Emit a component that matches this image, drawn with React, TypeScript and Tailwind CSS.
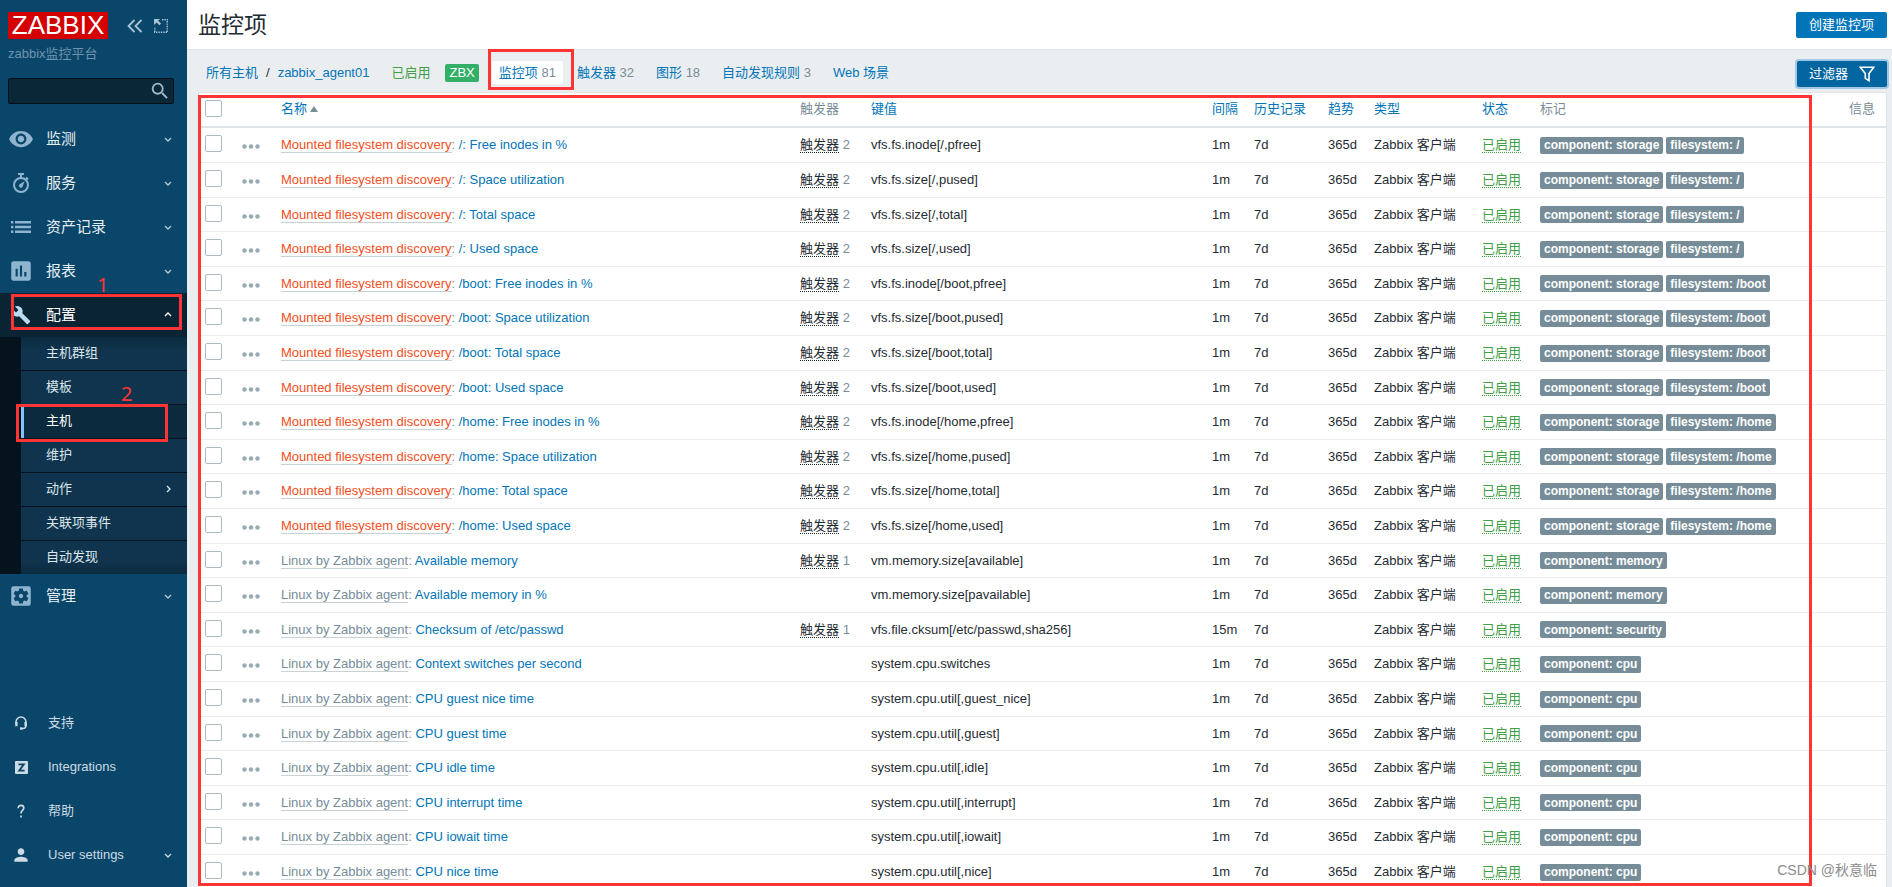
import React from "react";
import { MdBuild, MdInsertChart, MdPerson, MdRemoveRedEye, MdSearch, MdSettingsApplications } from "react-icons/md";

type Item = {
  template: string;
  discovered?: boolean;
  name: string;
  triggers?: number;
  itemKey: string;
  interval?: string;
  trends?: string;
  tags: string[];
};

const mounted = (path: string): Item[] =>
  [
    ["Free inodes in %", `vfs.fs.inode[${path},pfree]`],
    ["Space utilization", `vfs.fs.size[${path},pused]`],
    ["Total space", `vfs.fs.size[${path},total]`],
    ["Used space", `vfs.fs.size[${path},used]`],
  ].map(([name, itemKey]) => ({
    template: "Mounted filesystem discovery",
    discovered: true,
    name: `${path}: ${name}`,
    triggers: 2,
    itemKey,
    tags: ["component: storage", `filesystem: ${path}`],
  }));

const linux = (name: string, itemKey: string, tag: string, extra: Partial<Item> = {}): Item => ({
  template: "Linux by Zabbix agent",
  name,
  itemKey,
  tags: [`component: ${tag}`],
  ...extra,
});

const items: Item[] = [
  ...mounted("/"),
  ...mounted("/boot"),
  ...mounted("/home"),
  linux("Available memory", "vm.memory.size[available]", "memory", { triggers: 1 }),
  linux("Available memory in %", "vm.memory.size[pavailable]", "memory"),
  linux("Checksum of /etc/passwd", "vfs.file.cksum[/etc/passwd,sha256]", "security", {
    triggers: 1,
    interval: "15m",
    trends: "",
  }),
  linux("Context switches per second", "system.cpu.switches", "cpu"),
  linux("CPU guest nice time", "system.cpu.util[,guest_nice]", "cpu"),
  linux("CPU guest time", "system.cpu.util[,guest]", "cpu"),
  linux("CPU idle time", "system.cpu.util[,idle]", "cpu"),
  linux("CPU interrupt time", "system.cpu.util[,interrupt]", "cpu"),
  linux("CPU iowait time", "system.cpu.util[,iowait]", "cpu"),
  linux("CPU nice time", "system.cpu.util[,nice]", "cpu"),
];

function Chevron({ className = "" }: { className?: string }) {
  return (
    <svg className={`h-2 w-2 shrink-0 ${className}`} viewBox="0 0 8 8" fill="none" stroke="currentColor" strokeWidth="1.3" aria-hidden="true">
      <path d="M1 3 4 6 7 3" />
    </svg>
  );
}

function StopwatchIcon() {
  return (
    <svg className="h-5 w-5" viewBox="0 0 20 20" fill="none" stroke="currentColor" aria-hidden="true">
      <circle cx="10" cy="12" r="7" strokeWidth="2" />
      <path d="M7 1h6M10 1v4M15 4.5l2 2" strokeWidth="2" />
      <path d="M13.6 8.2 11.6 13.4A1.9 1.9 0 1 1 8.6 11.2Z" fill="currentColor" stroke="none" />
    </svg>
  );
}

function ListIcon() {
  return (
    <svg className="h-3 w-5" viewBox="0 0 20 12" fill="currentColor" aria-hidden="true">
      <path d="M0 0h2.4v2.4H0zM0 4.8h2.4v2.4H0zM0 9.6h2.4V12H0zM4 0h16v2.4H4zM4 4.8h16v2.4H4zM4 9.6h16V12H4z" />
    </svg>
  );
}

function HeadsetIcon() {
  return (
    <svg className="h-[14px] w-[14px]" viewBox="0 0 14 14" fill="none" stroke="currentColor" aria-hidden="true">
      <path d="M2 8V6a5 5 0 0 1 10 0v3.5A3 3 0 0 1 9 12.4H7" strokeWidth="1.5" />
      <path d="M2.4 6v4.2M11.6 6v4.2" strokeWidth="2.4" />
      <path d="M6 12.5h2.4" strokeWidth="2.4" />
    </svg>
  );
}

function IntegrationsIcon() {
  return (
    <svg className="h-[13px] w-[13px]" viewBox="0 0 13 13" aria-hidden="true">
      <rect width="13" height="13" rx="1" fill="currentColor" />
      <path d="M3.4 3.3h5.4L4.2 9.7h5.4" fill="none" stroke="#0a466a" strokeWidth="1.8" />
    </svg>
  );
}

function HelpIcon() {
  return (
    <svg className="h-[14px] w-[14px]" viewBox="0 0 14 14" fill="none" stroke="currentColor" strokeWidth="1.7" aria-hidden="true">
      <path d="M4.2 4.2C4.2 2.4 5.3 1.4 7 1.4s2.8 1 2.8 2.6C9.8 6 7 6.4 7 9.4" />
      <path d="M7 11.4v2" />
    </svg>
  );
}

function MenuLink({ icon, label, open = false }: { icon: React.ReactNode; label: string; open?: boolean }) {
  return (
    <a
      href="#"
      aria-expanded={open}
      className={`flex h-11 items-center pr-[15px] text-[15px] leading-5 ${open ? "bg-[#0b2433] text-white" : "text-[#e6eef3]"}`}
    >
      <span className={`flex w-[42px] shrink-0 justify-center ${open ? "text-[#b9dcf5]" : "text-[#8fb4cf]"}`}>{icon}</span>
      <span className="ml-1 grow">{label}</span>
      <Chevron className={open ? "rotate-180" : "text-[#b5cbd9]"} />
    </a>
  );
}

function FooterLink({ icon, label, more = false }: { icon: React.ReactNode; label: string; more?: boolean }) {
  return (
    <a href="#" className="flex h-11 items-center pr-[15px] text-[#ccdae3]">
      <span className="flex w-[42px] shrink-0 justify-center">{icon}</span>
      <span className="ml-[6px] grow">{label}</span>
      {more && <Chevron />}
    </a>
  );
}

const submenu = ["主机群组", "模板", "主机", "维护", "动作", "关联项事件", "自动发现"];

function Sidebar() {
  return (
    <aside className="flex w-[187px] shrink-0 flex-col bg-[#0a466a]">
      <div className="px-2 pt-3">
        <div className="flex items-center">
          <a href="#" className="flex h-[27px] w-[100px] items-center justify-center bg-[#d40000] text-[26px] leading-[27px] text-white">
            ZABBIX
          </a>
          <button type="button" aria-label="收起侧边栏" className="ml-[18px] text-[#a9c3d4]">
            <svg className="h-4 w-[18px]" viewBox="0 0 18 16" fill="none" stroke="currentColor" strokeWidth="1.8">
              <path d="M8.5 2 2.5 8l6 6M15.5 2l-6 6 6 6" />
            </svg>
          </button>
          <button type="button" aria-label="隐藏侧边栏" className="ml-[10px] text-[#a9c3d4]">
            <svg className="h-[14px] w-[14px]" viewBox="0 0 14 14" fill="none" stroke="currentColor">
              <path d="M8 .8h6M13.2 2v12M13 13.2H0M.8 13V8" strokeWidth="1.4" strokeDasharray="1.4 1" />
              <path d="M0 0h6L4.2 1.8 7 4.6 5.4 6.2 2.6 3.4 0 6Z" fill="currentColor" stroke="none" />
            </svg>
          </button>
        </div>
        <div className="mt-[7px] leading-4 text-[#6f94ad]">zabbix监控平台</div>
        <form className="mt-4 mr-[5px] flex h-[26px] items-center rounded-xs border border-[#03101a] bg-[#0a2738]" onSubmit={(e) => e.preventDefault()}>
          <input type="text" aria-label="搜索" className="h-full min-w-0 grow bg-transparent px-2 text-white outline-none" />
          <button type="submit" aria-label="搜索" className="mr-[2px] text-[#9db8c9]">
            <MdSearch size={22} />
          </button>
        </form>
      </div>
      <nav className="mt-[13px]" aria-label="主菜单">
        <MenuLink icon={<MdRemoveRedEye size={26} />} label="监测" />
        <MenuLink icon={<StopwatchIcon />} label="服务" />
        <MenuLink icon={<ListIcon />} label="资产记录" />
        <MenuLink icon={<MdInsertChart size={26} />} label="报表" />
        <div className="relative">
          <MenuLink icon={<MdBuild size={20} />} label="配置" open />
          <div className="pointer-events-none absolute top-px right-[5px] bottom-[7px] left-[11px] border-3 border-[#ff3535]" />
          <span className="absolute -top-[20px] left-[97px] font-['Noto_Sans'] text-[20px] leading-6 text-[#ff3535]">1</span>
        </div>
        <ul className="bg-[#04131c] pl-[21px]">
          {submenu.map((label) => (
            <li
              key={label}
              className={`relative border-b border-[#04131c] bg-[#10344d] first:bg-linear-to-b first:from-[#0b2b40] first:to-[#10344d] first:to-40% last:border-b-0 last:bg-linear-to-t last:from-[#0b2b40] last:to-[#10344d] last:to-40% ${
                label === "主机" ? "z-10" : ""
              }`}
            >
              <a
                href="#"
                className={`flex h-[33px] items-center pr-[15px] pb-px leading-4 ${
                  label === "主机" ? "border-l-3 border-[#7cc4fa] bg-[#0b2a3d] pl-[22px] text-white" : "pl-[25px] text-[#dbe6ed]"
                }`}
              >
                <span className="grow">{label}</span>
                {label === "动作" && <Chevron className="-rotate-90" />}
              </a>
              {label === "主机" && (
                <>
                  <div className="pointer-events-none absolute -top-px right-[19px] -bottom-[4px] -left-[5px] border-3 border-[#ff3535]" />
                  <span className="absolute -top-[23px] left-[100px] font-['Noto_Sans'] text-[20px] leading-6 text-[#ff3535]">2</span>
                </>
              )}
            </li>
          ))}
        </ul>
        <MenuLink icon={<MdSettingsApplications size={26} />} label="管理" />
      </nav>
      <nav className="mt-auto pb-[10px]" aria-label="用户菜单">
        <FooterLink icon={<HeadsetIcon />} label="支持" />
        <FooterLink icon={<IntegrationsIcon />} label="Integrations" />
        <FooterLink icon={<HelpIcon />} label="帮助" />
        <FooterLink icon={<MdPerson size={20} />} label="User settings" more />
      </nav>
    </aside>
  );
}

function Tab({ label, count }: { label: string; count?: number }) {
  return (
    <span>
      <a href="#" className="text-[#0275b8]">
        {label}
      </a>
      {count !== undefined && <span className="text-[#768d99]"> {count}</span>}
    </span>
  );
}

function HostNav() {
  return (
    <div className="flex h-[42px] items-center pr-[5px] pl-[19px] leading-4 whitespace-nowrap">
      <nav className="flex grow items-center pt-[3px]" aria-label="主机导航">
        <a href="#" className="text-[#0275b8]">
          所有主机
        </a>
        <span className="mx-2">/</span>
        <a href="#" className="text-[#0275b8]">
          zabbix_agent01
        </a>
        <span className="ml-[22px] text-[#429e47]">已启用</span>
        <span className="ml-[15px] flex h-[18px] items-center rounded-xs bg-[#34af67] px-1 text-white">ZBX</span>
        <span className="relative ml-[13px] flex h-[23px] items-center rounded-xs bg-white px-[7px]">
          <Tab label="监控项" count={81} />
          <span className="pointer-events-none absolute -top-[12px] -right-[11px] -bottom-[6px] -left-[4px] border-3 border-[#ff3535]" />
        </span>
        <span className="ml-[14px] flex gap-[22px]">
          <Tab label="触发器" count={32} />
          <Tab label="图形" count={18} />
          <Tab label="自动发现规则" count={3} />
          <Tab label="Web 场景" />
        </span>
      </nav>
      <button type="button" className="mt-[6px] flex h-[26px] items-center gap-[11px] rounded-xs bg-[#02659f] px-3 text-white ring-2 ring-[#9fc8e6]">
        过滤器
        <svg className="h-4 w-4" viewBox="0 0 16 16" fill="none" stroke="currentColor" strokeWidth="1.6" aria-hidden="true">
          <path d="M1.3 1.3h13.4L10 7.6v7.1L6.3 12.4V7.6Z" />
        </svg>
      </button>
    </div>
  );
}

function Check({ label }: { label: string }) {
  return (
    <input
      type="checkbox"
      aria-label={label}
      className="block h-[17px] w-[17px] appearance-none rounded-xs border border-[#acbbc2] bg-white checked:bg-[#0275b8]"
    />
  );
}

const columns: { label: string; sortable: boolean }[] = [
  { label: "触发器", sortable: false },
  { label: "键值", sortable: true },
  { label: "间隔", sortable: true },
  { label: "历史记录", sortable: true },
  { label: "趋势", sortable: true },
  { label: "类型", sortable: true },
  { label: "状态", sortable: true },
  { label: "标记", sortable: false },
  { label: "信息", sortable: false },
];

function ItemTable() {
  return (
    <div className="relative mr-[5px] ml-[11px] border border-[#dfe4e7] bg-white">
      <table className="w-full table-fixed border-separate border-spacing-0 text-left leading-4 whitespace-nowrap [&_td]:border-b [&_td]:border-[#ebeef0] [&_td]:px-[6px] [&_th]:border-b-2 [&_th]:border-[#dfe4e7] [&_th]:px-[6px] [&_th]:font-normal">
        <colgroup>
          <col className="w-[37px]" />
          <col className="w-[39px]" />
          <col />
          <col className="w-[71px]" />
          <col className="w-[341px]" />
          <col className="w-[42px]" />
          <col className="w-[74px]" />
          <col className="w-[46px]" />
          <col className="w-[108px]" />
          <col className="w-[58px]" />
          <col className="w-[309px]" />
          <col className="w-[43px]" />
        </colgroup>
        <thead>
          <tr className="h-[35px]">
            <th className="pb-[2px]">
              <Check label="全选" />
            </th>
            <th />
            <th className="pb-[2px]">
              <a href="#" className="text-[#0275b8]">
                名称
                <svg className="ml-[3px] inline h-[6px] w-2" viewBox="0 0 8 6" fill="#768d99" aria-hidden="true">
                  <path d="M4 0 8 6H0Z" />
                </svg>
              </a>
            </th>
            {columns.map(({ label, sortable }) => (
              <th key={label} className="pb-[2px] text-[#768d99]">
                {sortable ? (
                  <a href="#" className="text-[#0275b8]">
                    {label}
                  </a>
                ) : (
                  label
                )}
              </th>
            ))}
          </tr>
        </thead>
        <tbody>
          {items.map((item) => (
            <tr key={item.itemKey} className="h-[35px] nth-[5n+3]:h-[34px] nth-[5n+5]:h-[34px]">
              <td className="pb-[3px]">
                <Check label={item.name} />
              </td>
              <td>
                <button type="button" aria-label="更多操作" className="mt-[3px] block text-[#97aab3]">
                  <svg className="h-[5px] w-[18px]" viewBox="0 0 18 5" fill="currentColor">
                    <circle cx="2.5" cy="2.5" r="2.2" />
                    <circle cx="9" cy="2.5" r="2.2" />
                    <circle cx="15.5" cy="2.5" r="2.2" />
                  </svg>
                </button>
              </td>
              <td className="text-[#768d99]">
                <a href="#" className={`border-b border-[#c8d1d6] ${item.discovered ? "text-[#f24f1d]" : ""}`}>
                  {item.template}
                </a>
                {": "}
                <a href="#" className="text-[#0275b8]">
                  {item.name}
                </a>
              </td>
              <td className="text-[#768d99]">
                {item.triggers !== undefined && (
                  <>
                    <a href="#" className="border-b border-dotted border-[#1f2c33] text-[#1f2c33]">
                      触发器
                    </a>{" "}
                    {item.triggers}
                  </>
                )}
              </td>
              <td>{item.itemKey}</td>
              <td>{item.interval ?? "1m"}</td>
              <td>7d</td>
              <td>{item.trends ?? "365d"}</td>
              <td>Zabbix 客户端</td>
              <td>
                <a href="#" className="border-b border-dotted border-[#429e47] text-[#429e47]">
                  已启用
                </a>
              </td>
              <td>
                <div className="flex gap-[3px]">
                  {item.tags.map((tag) => (
                    <span key={tag} className="flex h-[17px] items-center rounded-xs bg-[#768d99] px-1 text-xs font-bold text-white">
                      {tag}
                    </span>
                  ))}
                </div>
              </td>
              <td />
            </tr>
          ))}
        </tbody>
      </table>
      <div className="pointer-events-none absolute top-[2px] right-[74px] bottom-1 -left-px border-3 border-[#ff3535]" />
    </div>
  );
}

export default function App() {
  return (
    <div className="relative flex h-screen overflow-hidden bg-[#ebeef0] font-['Liberation_Sans','Noto_Sans_CJK_SC',sans-serif] text-[13px] text-[#1f2c33]">
      <Sidebar />
      <main className="min-w-0 grow">
        <header className="flex h-[50px] items-center justify-between border-b border-[#dfe4e7] bg-white pr-[5px] pl-[11px]">
          <h1 className="text-[23px] leading-7">监控项</h1>
          <button type="button" className="h-[26px] rounded-xs bg-[#0275b8] px-[13px] leading-4 text-white">
            创建监控项
          </button>
        </header>
        <HostNav />
        <ItemTable />
      </main>
      <div className="pointer-events-none absolute right-[15px] bottom-[7px] text-[14px] leading-5 text-[#8c8c8c]">CSDN @秋意临</div>
    </div>
  );
}
